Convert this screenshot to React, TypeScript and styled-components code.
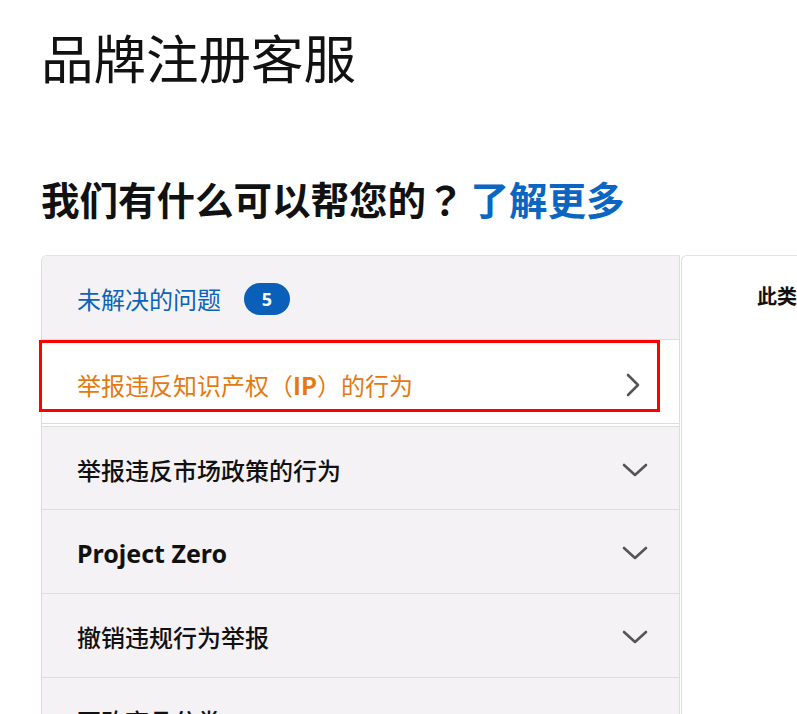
import React from "react";
import styled, { createGlobalStyle } from "styled-components";

const Global = createGlobalStyle`
  html, body {
    margin: 0;
    padding: 0;
    background: #ffffff;
    overflow: hidden;
    width: 797px;
    height: 714px;
  }
  body {
    font-family: "Noto Sans CJK SC", "Noto Sans", sans-serif;
    color: #111111;
  }
`;

const Page = styled.div`
  padding: 30px 0 0 41px;
  width: 756px;
  box-sizing: border-box;
`;

const Title = styled.h1`
  margin: 0;
  font-size: 52.5px;
  line-height: 1;
  font-weight: 400;
  color: #111111;
`;

const Heading = styled.h2`
  margin: 96px 0 0 0;
  font-size: 38.5px;
  line-height: 1;
  font-weight: 700;
  color: #111111;
  white-space: nowrap;
`;

const QuestionMark = styled.span`
  display: inline-block;
  width: 1em;
  margin-right: 6px;
  text-align: center;
  font-family: "Noto Sans CJK JP", "Noto Sans CJK SC", sans-serif;
  font-weight: 700;
`;

const LearnMore = styled.a`
  color: #0a66c2;
  text-decoration: none;
`;

const Panel = styled.div`
  margin-top: 38px;
  display: flex;
  gap: 1px;
  width: 800px;
`;

const LeftColumn = styled.div`
  width: 639px;
  flex: none;
  box-sizing: border-box;
  border-left: 1px solid #dddddd;
  border-right: 1px solid #dddddd;
  border-top: 1px solid #e4e2e4;
  border-top-left-radius: 6px;
  background: #ffffff;
`;

const Row = styled.div<{ $selected?: boolean; $gapAbove?: boolean }>`
  position: relative;
  height: 84px;
  display: flex;
  align-items: center;
  justify-content: space-between;
  box-sizing: border-box;
  padding: ${(p) => (p.$selected ? "6px 38px 0 35px" : "3px 31px 0 35px")};
  background: ${(p) => (p.$selected ? "#ffffff" : "#f5f2f5")};
  border-bottom: 1px solid #dddddd;
  ${(p) => (p.$gapAbove ? "margin-top: 2px; border-top: 1px solid #dddddd;" : "")}
  &:first-child {
    border-top-left-radius: 5px;
  }
`;

const RowLabel = styled.span<{ $tone?: "link" | "active" | "plain" }>`
  display: flex;
  align-items: center;
  gap: 23px;
  font-size: 24px;
  line-height: 1;
  font-weight: ${(p) => (p.$tone === "plain" ? 500 : 400)};
  color: ${(p) =>
    p.$tone === "link" ? "#0d63b8" : p.$tone === "active" ? "#e47911" : "#111111"};
`;

const Abbr = styled.span`
  font-weight: 700;
`;

const LatinLabel = styled.span`
  font-family: "Noto Sans", "Liberation Sans", sans-serif;
  font-size: 25px;
  font-weight: 700;
  color: #111111;
  line-height: 1;
`;

const Badge = styled.span`
  display: inline-flex;
  align-items: center;
  justify-content: center;
  width: 46px;
  height: 32px;
  border-radius: 16px;
  background: #0a5fb8;
  color: #ffffff;
  font-family: "Noto Sans", "Liberation Sans", sans-serif;
  font-size: 18px;
  font-weight: 700;
`;

const Highlight = styled.div`
  position: absolute;
  left: -3px;
  top: 0px;
  width: 621px;
  height: 72px;
  border: 3px solid #ff0000;
  box-sizing: border-box;
  pointer-events: none;
`;

const RightPanel = styled.div`
  flex: 1;
  min-height: 460px;
  border-left: 1px solid #dddddd;
  border-top: 1px solid #e4e2e4;
  border-top-left-radius: 6px;
  background: #ffffff;
  padding: 30px 0 0 75px;
  box-sizing: border-box;
  overflow: hidden;
`;

const InfoText = styled.p`
  margin: 0;
  font-size: 20px;
  font-weight: 700;
  color: #111111;
  white-space: nowrap;
  line-height: 1;
`;

const ChevronDown = () => (
  <svg width="26" height="16" viewBox="0 0 26 16" aria-hidden="true">
    <polyline
      points="2,3 13,13 24,3"
      fill="none"
      stroke="#555555"
      strokeWidth="2.6"
      strokeLinecap="round"
      strokeLinejoin="round"
    />
  </svg>
);

const ChevronRight = () => (
  <svg width="16" height="24" viewBox="0 0 16 24" aria-hidden="true">
    <polyline
      points="3,2 13,12 3,22"
      fill="none"
      stroke="#555555"
      strokeWidth="2.6"
      strokeLinecap="round"
      strokeLinejoin="round"
    />
  </svg>
);

const items = ["举报违反市场政策的行为", "Project Zero", "撤销违规行为举报", "更改商品分类"];

export default function App() {
  return (
    <>
      <Global />
      <Page>
        <Title>品牌注册客服</Title>
        <Heading>
          我们有什么可以帮您的<QuestionMark>？</QuestionMark>
          <LearnMore href="#">了解更多</LearnMore>
        </Heading>
        <Panel>
          <LeftColumn>
            <Row>
              <RowLabel $tone="link">
                未解决的问题
                <Badge>5</Badge>
              </RowLabel>
            </Row>
            <Row $selected>
              <Highlight />
              <RowLabel $tone="active">
                <span>
                  举报违反知识产权（<Abbr>IP</Abbr>）的行为
                </span>
              </RowLabel>
              <ChevronRight />
            </Row>
            {items.map((label, i) => (
              <Row key={label} $gapAbove={i === 0}>
                {/[A-Za-z]/.test(label) ? (
                  <LatinLabel>{label}</LatinLabel>
                ) : (
                  <RowLabel $tone="plain">{label}</RowLabel>
                )}
                <ChevronDown />
              </Row>
            ))}
          </LeftColumn>
          <RightPanel>
            <InfoText>此类问题可以通过以下方式解决</InfoText>
          </RightPanel>
        </Panel>
      </Page>
    </>
  );
}
